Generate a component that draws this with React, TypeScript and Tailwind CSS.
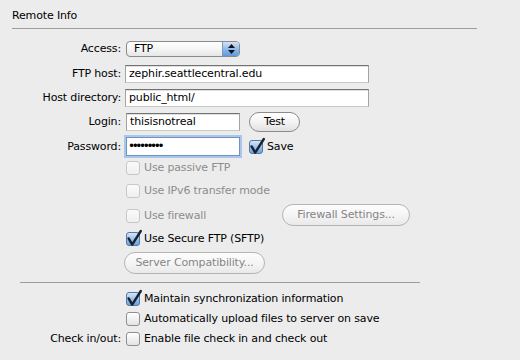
import clsx from "clsx";

function Check({ checked = false, disabled = false }: { checked?: boolean; disabled?: boolean }) {
  return (
    <span
      className={clsx(
        "relative ml-px inline-block h-[14px] w-[14px] shrink-0 rounded-[3px] border",
        checked
          ? "border-[#5679a3] bg-linear-to-b from-[#d6e6f8] via-[#9dc3ee] to-[#6aa2e2]"
          : disabled
          ? "border-[#c8c8c8] bg-linear-to-b from-[#fbfbfb] to-[#efefef]"
          : "border-[#8f8f8f] bg-linear-to-b from-white to-[#e4e4e4]"
      )}
    >
      {checked && (
        <svg className="absolute left-[-1px] top-[-4px]" width="17" height="18" viewBox="0 0 17 18">
          <path
            d="M2.6 9.4 L6.2 15.6 L14.8 2"
            stroke="#1a2230"
            strokeWidth="2.4"
            fill="none"
            strokeLinecap="round"
            strokeLinejoin="round"
          />
        </svg>
      )}
    </span>
  );
}

function CheckRow({ text, checked, disabled }: { text: string; checked?: boolean; disabled?: boolean }) {
  return (
    <div className="flex items-center">
      <Check checked={checked} disabled={disabled} />
      <span className={clsx("ml-[4px] leading-[14px]", disabled ? "text-[#8d8d8d]" : "text-black")}>{text}</span>
    </div>
  );
}

const label = "w-[121px] shrink-0 text-right leading-[14px]";
const field =
  "h-[18px] bg-white border border-[#a3a3a3] border-t-[#727272] border-b-[#c9c9c9] shadow-[inset_0_1px_0_#e0e0e0] pl-[3px] leading-[16px] whitespace-nowrap overflow-hidden";

export default function App() {
  return (
    <div className="h-[360px] w-[520px] overflow-hidden bg-[#ececec] font-['DejaVu_Sans',sans-serif] text-[11px] tracking-[-0.15px] text-black">
      <div className="pl-3 pt-[9px] leading-[14px]">Remote Info</div>
      <div className="ml-3 mt-[5px] h-px w-[465px] bg-[#9c9c9c]" />

      {/* Access */}
      <div className="mt-[12px] flex h-[16px] items-center">
        <span className={label}>Access:</span>
        <div className="ml-[5px] flex h-[16px] w-[114px] overflow-hidden rounded-[4px] border border-[#8a8a8a] bg-linear-to-b from-white via-[#f6f6f6] to-[#e6e6e6]">
          <span className="flex-1 pl-[7px] leading-[14px]">FTP</span>
          <span className="flex w-[17px] flex-col items-center justify-center gap-[2px] border-l border-[#7f98b8] bg-linear-to-b from-[#d2e3f7] via-[#8fbbeb] to-[#5c9ae0]">
            <svg width="7" height="4" viewBox="0 0 7 4">
              <path d="M3.5 0 L7 4 L0 4 Z" fill="#111" />
            </svg>
            <svg width="7" height="4" viewBox="0 0 7 4">
              <path d="M0 0 L7 0 L3.5 4 Z" fill="#111" />
            </svg>
          </span>
        </div>
      </div>

      {/* FTP host */}
      <div className="mt-[8px] flex h-[18px] items-center">
        <span className={label}>FTP host:</span>
        <div className={clsx(field, "ml-[4px] w-[244px]")}>zephir.seattlecentral.edu</div>
      </div>

      {/* Host directory */}
      <div className="mt-[6px] flex h-[18px] items-center">
        <span className={label}>Host directory:</span>
        <div className={clsx(field, "ml-[4px] w-[244px]")}>public_html/</div>
      </div>

      {/* Login */}
      <div className="mt-[5px] flex h-[20px] items-center">
        <span className={label}>Login:</span>
        <div className={clsx(field, "ml-[5px] w-[114px]")}>thisisnotreal</div>
        <button className="ml-[9px] h-[20px] w-[51px] rounded-full border border-[#8a8a8a] bg-linear-to-b from-white via-[#f3f3f3] to-[#e1e1e1] text-center leading-[18px]">
          Test
        </button>
      </div>

      {/* Password */}
      <div className="mt-[5px] flex h-[19px] items-center">
        <span className={label}>Password:</span>
        <div className="ml-[5px] h-[19px] w-[114px] overflow-hidden border border-[#6f93c2] bg-white pl-[1px] text-[12px] leading-[17px] tracking-[-3.4px] shadow-[0_0_0_2px_#a9c7ea]">
          •••••••••
        </div>
        <div className="ml-[8px]">
          <CheckRow text="Save" checked />
        </div>
      </div>

      {/* Options */}
      <div className="mt-[5px] flex h-[14px] items-center">
        <span className="w-[125px] shrink-0" />
        <CheckRow text="Use passive FTP" disabled />
      </div>
      <div className="mt-[9px] flex h-[14px] items-center">
        <span className="w-[125px] shrink-0" />
        <CheckRow text="Use IPv6 transfer mode" disabled />
      </div>
      <div className="mt-[6px] flex h-[22px] items-center">
        <span className="w-[125px] shrink-0" />
        <div className="w-[157px] pt-[2px]">
          <CheckRow text="Use firewall" disabled />
        </div>
        <button className="h-[22px] w-[128px] rounded-full border border-[#b5b5b5] bg-linear-to-b from-[#fdfdfd] via-[#f5f5f5] to-[#e9e9e9] text-center leading-[20px] text-[#858585]">
          Firewall Settings...
        </button>
      </div>
      <div className="mt-[6px] flex h-[14px] items-center">
        <span className="w-[125px] shrink-0" />
        <CheckRow text="Use Secure FTP (SFTP)" checked />
      </div>
      <div className="mt-[6px] flex h-[22px] items-center">
        <span className="w-[124px] shrink-0" />
        <button className="h-[22px] w-[141px] rounded-full border border-[#b5b5b5] bg-linear-to-b from-[#fdfdfd] via-[#f5f5f5] to-[#e9e9e9] text-center leading-[20px] text-[#858585]">
          Server Compatibility...
        </button>
      </div>

      <div className="ml-5 mt-[8px] h-px w-[400px] bg-[#9c9c9c]" />

      <div className="mt-[9px] flex h-[14px] items-center">
        <span className="w-[125px] shrink-0" />
        <CheckRow text="Maintain synchronization information" checked />
      </div>
      <div className="mt-[6px] flex h-[14px] items-center">
        <span className="w-[125px] shrink-0" />
        <CheckRow text="Automatically upload files to server on save" />
      </div>
      <div className="mt-[6px] flex h-[14px] items-center">
        <span className={label}>Check in/out:</span>
        <span className="w-[4px] shrink-0" />
        <CheckRow text="Enable file check in and check out" />
      </div>
    </div>
  );
}
